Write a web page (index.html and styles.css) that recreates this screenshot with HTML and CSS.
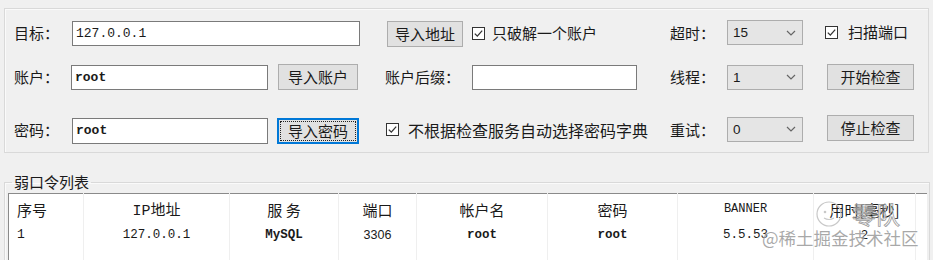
FILE: index.html
```html
<!DOCTYPE html>
<html lang="zh-CN">
<head>
  <meta charset="UTF-8">
  <title>弱口令检测</title>
  <link rel="stylesheet" href="styles.css">
</head>
<body>
  <div class="window">
    <div class="group options">
      <div class="row r1">
        <span class="lbl">目标：</span>
        <div class="edit target">127.0.0.1</div>
        <button class="btn c4 w76">导入地址</button>
        <label class="check c5">
          <svg class="box" width="13" height="13" viewBox="0 0 13 13"><rect x="0.5" y="0.5" width="12" height="12" fill="#fff" stroke="#333"/><path d="M2.8 6.6 L5.3 9.1 L10.2 3.6" fill="none" stroke="#333" stroke-width="1.3"/></svg>
          只破解一个账户
        </label>
        <span class="lbl c6">超时：</span>
        <div class="combo c7"><span>15</span><svg width="10" height="6" viewBox="0 0 10 6"><polyline points="1,1 5,5 9,1" fill="none" stroke="#666" stroke-width="1.2"/></svg></div>
        <label class="check c8">
          <svg class="box" width="13" height="13" viewBox="0 0 13 13"><rect x="0.5" y="0.5" width="12" height="12" fill="#fff" stroke="#333"/><path d="M2.8 6.6 L5.3 9.1 L10.2 3.6" fill="none" stroke="#333" stroke-width="1.3"/></svg>
          扫描端口
        </label>
      </div>

      <div class="row r2">
        <span class="lbl">账户：</span>
        <div class="edit short mono bold nudge-l">root</div>
        <button class="btn c3 w80">导入账户</button>
        <span class="lbl c4">账户后缀：</span>
        <div class="edit c5 suffix"></div>
        <span class="lbl c6">线程：</span>
        <div class="combo c7"><span>1</span><svg width="10" height="6" viewBox="0 0 10 6"><polyline points="1,1 5,5 9,1" fill="none" stroke="#666" stroke-width="1.2"/></svg></div>
        <button class="btn c8 w87">开始检查</button>
      </div>

      <div class="row r3">
        <span class="lbl">密码：</span>
        <div class="edit short mono bold">root</div>
        <button class="btn c3 w82 focused"><span>导入密码</span></button>
        <label class="check c4 wide">
          <svg class="box" width="13" height="13" viewBox="0 0 13 13"><rect x="0.5" y="0.5" width="12" height="12" fill="#fff" stroke="#333"/><path d="M2.8 6.6 L5.3 9.1 L10.2 3.6" fill="none" stroke="#333" stroke-width="1.3"/></svg>
          不根据检查服务自动选择密码字典
        </label>
        <span class="lbl c6">重试：</span>
        <div class="combo c7"><span>0</span><svg width="10" height="6" viewBox="0 0 10 6"><polyline points="1,1 5,5 9,1" fill="none" stroke="#666" stroke-width="1.2"/></svg></div>
        <button class="btn c8 w87">停止检查</button>
      </div>
    </div>

    <fieldset class="group results">
      <legend>弱口令列表</legend>
      <table class="list">
        <colgroup>
          <col style="width:75px"><col style="width:146px"><col style="width:109px"><col style="width:78px">
          <col style="width:131px"><col style="width:130px"><col style="width:136px"><col style="width:102px"><col>
        </colgroup>
        <thead>
          <tr>
            <th class="first">序号</th>
            <th><span class="mono">IP</span>地址</th>
            <th>服 务</th>
            <th>端口</th>
            <th>帐户名</th>
            <th>密码</th>
            <th class="mono bold small">BANNER</th>
            <th>用时[毫秒]</th>
            <th></th>
          </tr>
        </thead>
        <tbody>
          <tr>
            <td class="first mono">1</td>
            <td class="mono">127.0.0.1</td>
            <td class="mono bold">MySQL</td>
            <td class="sans">3306</td>
            <td class="mono bold">root</td>
            <td class="mono bold">root</td>
            <td class="mono">5.5.53</td>
            <td class="sans">2</td>
            <td></td>
          </tr>
          <tr class="filler">
            <td></td><td></td><td></td><td></td><td></td><td></td><td></td><td></td><td></td>
          </tr>
        </tbody>
      </table>
    </fieldset>

    <div class="mark-logo">
      <svg width="36" height="30" viewBox="0 0 36 30"><circle cx="17" cy="15" r="12" fill="none" stroke="#c8c8c8" stroke-width="1.2"/><circle cx="13" cy="13" r="1.3" fill="#c8c8c8"/><circle cx="21" cy="13" r="1.3" fill="#c8c8c8"/><path d="M12 19 Q17 22 22 19" fill="none" stroke="#c8c8c8" stroke-width="1.2"/></svg>
      <span>零队</span>
    </div>
    <div class="mark">@稀土掘金技术社区</div>
  </div>
</body>
</html>
```

FILE: styles.css
```css
html, body {
  margin: 0;
  padding: 0;
  background: #f0f0f0;
  overflow: hidden;
}

body {
  font-family: "Noto Sans CJK SC", "Noto Sans", sans-serif;
  font-size: 15px;
  color: #1a1a1a;
}

.window {
  position: relative;
  width: 933px;
  height: 260px;
  padding: 8px 4px 0 4px;
  box-sizing: border-box;
}

/* group boxes */
.group {
  border: 1px solid #d9d9d9;
  box-shadow: inset 1px 1px 0 #fafafa;
}

.options {
  padding: 10px 0 11px 9px;
}

.row {
  display: grid;
  grid-template-columns: 58px 206px 107px 87px 198px 57px 98px auto;
  align-items: center;
  height: 26px;
}

.r1 { height: 27px; }
.r2 { margin-top: 18px; }
.r3 { margin-top: 25px; }

.c3 { grid-column: 3; }
.c4 { grid-column: 4; }
.c5 { grid-column: 5; }
.c6 { grid-column: 6; }
.c7 { grid-column: 7; }
.c8 { grid-column: 8; }

.lbl {
  line-height: 20px;
  white-space: nowrap;
}

/* text boxes */
.edit {
  height: 25px;
  box-sizing: border-box;
  background: #fff;
  border: 1px solid #7a7a7a;
  padding-left: 3px;
  font-family: "Liberation Mono", monospace;
  font-size: 13px;
  line-height: 23px;
}

.edit.target {
  grid-column: 2 / span 2;
  width: 288px;
  margin-top: 1px;
}

.edit.short { width: 196px; }
.edit.nudge-l { margin-left: -1px; width: 197px; }
.edit.suffix { width: 165px; }

.r3 .edit { height: 26px; margin-top: 2px; }

.mono { font-family: "Liberation Mono", monospace; }
.bold { font-weight: bold; }
.sans { font-family: "Liberation Sans", sans-serif; font-size: 13px; }

/* buttons */
.btn {
  height: 26px;
  box-sizing: border-box;
  background: #e1e1e1;
  border: 1px solid #adadad;
  font-family: inherit;
  font-size: 15px;
  color: #1a1a1a;
  padding: 0;
  line-height: 22px;
}

.w76 { width: 76px; margin-left: 2px; margin-top: 2px; }
.w80 { width: 80px; }
.w82 { width: 82px; margin-left: -1px; margin-top: 3px; }
.w87 { width: 87px; margin-left: 2px; }

.r3 .w87 { margin-top: -4px; }

.btn.focused {
  border: 2px solid #0078d7;
  padding: 1px;
}

.btn.focused span {
  display: block;
  height: 18px;
  line-height: 18px;
  border: 1px dotted #222;
}

/* checkboxes */
.check {
  display: flex;
  align-items: center;
  gap: 7px;
  white-space: nowrap;
  line-height: 20px;
}

.check .box { flex: none; }

.check.c8 { margin-top: -2px; gap: 10px; }

.check.wide {
  grid-column: 4 / span 2;
  margin-left: 1px;
  gap: 9px;
  font-size: 16px;
}

/* drop-down lists */
.combo {
  width: 76px;
  height: 25px;
  box-sizing: border-box;
  background: #e5e5e5;
  border: 1px solid #adadad;
  display: flex;
  align-items: center;
  justify-content: space-between;
  padding: 0 6px 0 5px;
  font-family: "Liberation Sans", sans-serif;
  font-size: 13.5px;
}

.r1 .combo { margin-top: -1px; }
.r3 .combo { margin-top: -1px; }

/* result list */
.results {
  margin: 19px 0 0 0;
  padding: 0 1px 0 3px;
  height: 90px;
}

.results legend {
  padding: 0 2px;
  margin-left: 4px;
  line-height: 20px;
  font-size: 15px;
}

.list {
  margin-top: 1px;
  width: 920px;
  table-layout: fixed;
  border-collapse: collapse;
  background: #fff;
  border: 1px solid #8a8a8a;
}

.list th,
.list td {
  border-right: 1px solid #efefef;
  text-align: center;
  padding: 0;
  white-space: nowrap;
  overflow: hidden;
}

.list th {
  height: 30px;
  font-weight: normal;
  font-size: 15px;
}

.list th.small { font-size: 12px; }

.list td {
  height: 21px;
  font-size: 12.5px;
}

.list .first {
  text-align: left;
  padding-left: 8px;
}

.list td.first { font-size: 13px; }

.list .filler td { height: 40px; }

/* watermarks */
.mark {
  position: absolute;
  left: 762px;
  top: 227px;
  font-size: 17.5px;
  line-height: 22px;
  color: rgba(140, 140, 140, 0.75);
  text-shadow: 0 0 2px #fff;
  white-space: nowrap;
}

.mark-logo {
  position: absolute;
  left: 812px;
  top: 199px;
  display: flex;
  align-items: center;
  gap: 4px;
}

.mark-logo span {
  font-size: 24px;
  line-height: 30px;
  color: transparent;
  -webkit-text-stroke: 0.8px #9a9a9a;
}
```
